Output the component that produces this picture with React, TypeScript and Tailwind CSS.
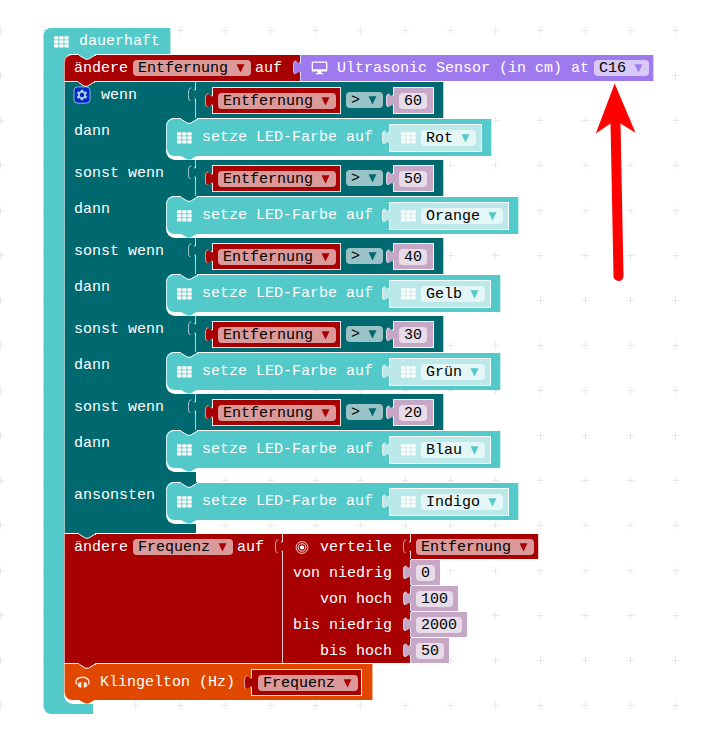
import React from "react";

const CYAN = "#54c9c9";
const PALE = "#bbe9e9";
const TEAL = "#006970";
const RED = "#a80000";
const MAUVE = "#c6a8c6";
const PURPLE = "#9f79ee";
const ORANGE = "#e04800";

/** Downward bump of the previous statement, lined with the block highlight. */
function Notch({ fill }: { fill: string }) {
  return (
    <svg className="absolute -top-px left-[14px]" width="17" height="7" viewBox="0 0 17 7">
      <path d="M0 0H16V1L15.5 1.5L9.5 5H6.5L.5 1.5L0 1Z" fill={fill} />
      <path d="M0 1.5H.5L6.5 5.200H9.5L15.5 1.5H17" fill="none" stroke="#fff" strokeWidth="1" />
    </svg>
  );
}

/** Bump under the last block of a stack. */
function BottomNotch({ fill }: { fill: string }) {
  return (
    <svg className="absolute -bottom-[4px] left-[14px]" width="16" height="5" viewBox="0 0 16 5">
      <path d="M0 0V1L6.5 4.500H9.5L15.5 1V0Z" fill={fill} />
    </svg>
  );
}

/** Puzzle tab on the left side of a value block. */
function Tab({ fill }: { fill: string }) {
  return (
    <svg className="absolute -left-[8px] top-[5px] overflow-visible" width="9" height="15" viewBox="0 0 9 15">
      <path d="M9.5 1.5H8c0 7-8-8.500-8 6s8-1 8 6H9.500Z" fill={fill} />
      <path d="M3.400 1C.6.600.5 4 .5 7.500S.6 14 2.400 13.600" fill="none" stroke="#fff" strokeOpacity=".65" />
      <path d="M7.500 0V1.500Q7.500 3 6 3M7.500 15V13.500Q7.500 12.500 6.500 12" fill="none" stroke="#fff" strokeOpacity=".75" />
    </svg>
  );
}

function GridIcon() {
  return (
    <svg className="shrink-0" width="15" height="12" viewBox="0 0 15 12">
      {[0, 1, 2].map((r) =>
        [0, 1, 2].map((c) => (
          <rect key={`${r}${c}`} x={c * 5.15 + 0.1} y={r * 4 + 0.2} width="4.300" height="3.200" rx=".3" fill="#fff" />
        )),
      )}
    </svg>
  );
}

function Dropdown({ text, arrow }: { text: string; arrow: string }) {
  return (
    <span className="flex h-[16px] shrink-0 items-center rounded-[4px] bg-white/60 pl-[5px] pr-[6px] leading-[16px] text-black">
      <span className="pt-px">{text}</span>
      <svg className="ml-[8px] mt-px" width="8.500" height="9" viewBox="0 0 8.5 9">
        <path d="M.5 .3H8.500L4.500 8.500Z" fill={arrow} />
      </svg>
    </span>
  );
}

function NumberField({ value }: { value: string }) {
  return <span className="flex h-[16px] items-center rounded-[4px] bg-white/60 px-[5px] pt-px leading-[16px] text-black">{value}</span>;
}

function Compare({ value }: { value: string }) {
  return (
    <div className="relative flex h-[36px] w-[249px] shrink-0 items-start border-x border-white/70 bg-[#006970] pl-[16px] pt-[5px]">
      <Tab fill={TEAL} />
      <div className="relative flex h-[27px] w-[129px] shrink-0 items-center border border-white/90 bg-[#a80000] pl-[5px] pt-px">
        <Tab fill={RED} />
        <Dropdown text="Entfernung" arrow={RED} />
      </div>
      <div className="ml-[5px] mt-[5px] flex w-[36px]">
        <Dropdown text=">" arrow={TEAL} />
      </div>
      <div className="relative ml-[11px] flex h-[27px] w-[41px] shrink-0 items-center border border-white/90 bg-[#c6a8c6] pl-[5px] pt-px">
        <Tab fill={MAUVE} />
        <NumberField value={value} />
      </div>
    </div>
  );
}

function SetLed({ color }: { color: string }) {
  return (
    <div className="relative flex h-[38px] w-max items-start rounded-l-[8px] border-x border-t border-x-white/70 border-t-white bg-[#54c9c9] pr-[9px]">
      <Notch fill={TEAL} />
      <BottomNotch fill={CYAN} />
      <div className="flex h-[37px] items-center pl-[10px]">
        <GridIcon />
        <span className="ml-[10px] pt-[2px]">setze LED-Farbe auf</span>
      </div>
      <div className="relative ml-[16px] mt-[5px] flex h-[28px] items-center border border-white/90 bg-[#bbe9e9] pl-[11px] pr-[5px]">
        <Tab fill={PALE} />
        <GridIcon />
        <span className="ml-[5px] flex">
          <Dropdown text={color} arrow={CYAN} />
        </span>
      </div>
    </div>
  );
}

function StatementRow({ label, color }: { label: string; color: string }) {
  return (
    <div className="flex h-[42px] w-[132px] bg-[#006970]">
      <div className="w-[102px] shrink-0 border-l border-white/60 pl-[9px] leading-[28px]">{label}</div>
      <div className="w-[30px] shrink-0 rounded-l-[9px] bg-white">
        <SetLed color={color} />
      </div>
    </div>
  );
}

function GearBadge() {
  return (
    <svg className="-ml-px mt-[4px]" width="18" height="18" viewBox="0 0 18 18">
      <rect x="1" y=".9" width="16" height="16.200" rx="3.500" fill="#0028c8" stroke="#8fb4d8" />
      <g transform="translate(9 9)">
        {[0, 60, 120, 180, 240, 300].map((a) => (
          <rect key={a} x="-1.300" y="-5.300" width="2.600" height="2.500" rx=".4" fill="#a8cfe0" transform={`rotate(${a})`} />
        ))}
        <circle r="3.100" fill="none" stroke="#a8cfe0" strokeWidth="1.700" />
      </g>
    </svg>
  );
}

const branches = [
  { value: "60", color: "Rot" },
  { value: "50", color: "Orange" },
  { value: "40", color: "Gelb" },
  { value: "30", color: "Grün" },
  { value: "20", color: "Blau" },
];

function IfBlock() {
  return (
    <div className="relative border-t border-white">
      <Notch fill={RED} />
      {branches.map((b, i) => (
        <React.Fragment key={b.value}>
          <div className="flex h-[36px]">
            <div className="flex w-[131px] shrink-0 items-start border-l border-white/60 bg-[#006970] pl-[9px] leading-[28px]">
              {i === 0 ? (
                <>
                  <GearBadge />
                  <span className="ml-[10px]">wenn</span>
                </>
              ) : (
                "sonst wenn"
              )}
            </div>
            <Compare value={b.value} />
          </div>
          <StatementRow label="dann" color={b.color} />
        </React.Fragment>
      ))}
      <div className="h-[10px] w-[132px] border-l border-white/60 bg-[#006970]" />
      <StatementRow label="ansonsten" color="Indigo" />
      <div className="h-[9px] w-[132px] border-l border-white/60 bg-[#006970]" />
    </div>
  );
}

const mapRows = [
  { label: "von niedrig", value: "0" },
  { label: "von hoch", value: "100" },
  { label: "bis niedrig", value: "2000" },
  { label: "bis hoch", value: "50" },
];

function MapBlock() {
  return (
    <div className="relative flex h-[129px] w-[129px] flex-col border-l border-white/80 bg-[#a80000]">
      <Tab fill={RED} />
      <div className="flex h-[26px]">
        <div className="flex w-[109px] shrink-0 items-center pl-[12px]">
          <svg width="14" height="14" viewBox="0 0 14 14" fill="none" stroke="#fff">
            <circle cx="7" cy="7.500" r="5.900" strokeWidth="1" strokeOpacity=".8" />
            <circle cx="7" cy="7.500" r="3.800" strokeWidth="1.100" strokeOpacity=".8" />
            <circle cx="7" cy="7.500" r="2.100" fill="#fff" stroke="none" />
          </svg>
          <span className="ml-auto pt-[2px] leading-[26px]">verteile</span>
        </div>
        <div className="relative ml-[18px] flex h-[25px] items-center border-x border-white/80 bg-[#a80000] pl-[5px] pr-[4px] pt-px">
          <Tab fill={RED} />
          <Dropdown text="Entfernung" arrow={RED} />
        </div>
      </div>
      {mapRows.map((row) => (
        <div key={row.label} className="flex h-[26px] shrink-0">
          <div className="w-[109px] shrink-0 text-right leading-[28px]">{row.label}</div>
          <div className="relative ml-[18px] flex h-[25px] items-center border-l border-white/50 bg-[#c6a8c6] px-[5px] pt-px">
            <Tab fill={MAUVE} />
            <NumberField value={row.value} />
          </div>
        </div>
      ))}
    </div>
  );
}

function WorkspaceGrid() {
  return (
    <svg className="absolute inset-0" width="701" height="746">
      <defs>
        <pattern id="dots" x="-22" y="8" width="45" height="45" patternUnits="userSpaceOnUse">
          <path d="M19 22.500H26M22.500 19V26" stroke="#e8e8e8" strokeWidth="1" />
        </pattern>
      </defs>
      <rect y="20" width="701" height="726" fill="url(#dots)" />
    </svg>
  );
}

export default function App() {
  return (
    <div className="relative h-[746px] w-[701px] overflow-hidden whitespace-pre bg-white font-['Liberation_Mono',monospace] text-[15px] text-white">
      <WorkspaceGrid />
      <div className="relative pl-[43px] pt-[28px]">
        <div className="w-[50px] rounded-l-[8px] border-l border-white/50 bg-[#54c9c9]">
          <div className="flex h-[26px] w-[127px] items-center rounded-tl-[8px] border-r border-white/60 bg-[#54c9c9] pl-[10px] pt-px">
            <GridIcon />
            <span className="ml-[10px] pt-px">dauerhaft</span>
          </div>
          <div className="ml-[20px] h-[650px] rounded-l-[9px] bg-white">
            <div className="w-max">
              <div className="relative flex h-[27px] rounded-tl-[8px] border-l border-t border-l-white/60 border-t-white bg-[#a80000] pl-[9px]">
                <Notch fill={CYAN} />
                <div className="flex h-[26px] w-[226px] items-center">
                  <span className="pt-[2px]">ändere</span>
                  <span className="ml-[5px] flex">
                    <Dropdown text="Entfernung" arrow={RED} />
                  </span>
                  <span className="ml-[4.500px] pt-[2px]">auf</span>
                </div>
                <div className="relative flex h-[26px] items-center border-x border-white/60 bg-[#9f79ee] pl-[10px] pr-[4px]">
                  <Tab fill={PURPLE} />
                  <svg width="17" height="14" viewBox="0 0 17 14">
                    <path fillRule="evenodd" d="M2 .5H15Q16.300.5 16.300 1.800V9.300Q16.300 10.600 15 10.600H10.300V12H12V13.200H5V12H6.700V10.600H2Q.7 10.600.7 9.300V1.800Q.7.500 2 .5ZM2 1.800V8.300H15V1.800Z" fill="#fff" />
                  </svg>
                  <span className="ml-[9px] pt-[2px]">Ultrasonic Sensor (in cm) at</span>
                  <span className="ml-[5px] flex">
                    <Dropdown text="C16" arrow={PURPLE} />
                  </span>
                </div>
              </div>
            </div>

            <div className="w-max">
              <IfBlock />
            </div>

            <div className="relative flex h-[130px] w-[219px] border-l border-t border-l-white/60 border-t-white bg-[#a80000]">
              <Notch fill={TEAL} />
              <div className="flex h-[26px] w-[217px] shrink-0 items-center pl-[9px]">
                <span className="pt-[2px]">ändere</span>
                <span className="ml-[5px] flex">
                  <Dropdown text="Frequenz" arrow={RED} />
                </span>
                <span className="ml-[4.500px] pt-[2px]">auf</span>
              </div>
              <div className="h-[129px]">
                <MapBlock />
              </div>
            </div>

            <div className="relative flex h-[37px] w-[309px] items-center rounded-bl-[8px] border-x border-t border-x-white/60 border-t-white bg-[#e04800] pl-[10px]">
              <Notch fill={RED} />
              <BottomNotch fill={ORANGE} />
              <svg width="15" height="14" viewBox="0 0 15 14">
                <path d="M1.500 9.500C.2 6.500 1.400 2.200 7.500 2.200S14.800 6.500 13.500 9.500" fill="none" stroke="#fff" strokeWidth="1.400" strokeOpacity=".85" />
                <path d="M6.300 7V12.700C4 12.700 2.600 11.500 2.600 9.800S4 7 6.300 7ZM8.700 7V12.700C11 12.700 12.400 11.500 12.400 9.800S11 7 8.700 7Z" fill="#fff" fillOpacity=".85" />
              </svg>
              <span className="ml-[10px] pt-[2px]">Klingelton (Hz)</span>
              <div className="relative ml-[16px] flex h-[27px] w-[111px] shrink-0 items-center border border-white/90 bg-[#a80000] pl-[6px] pt-[2px]">
                <Tab fill={RED} />
                <Dropdown text="Frequenz" arrow={RED} />
              </div>
            </div>
          </div>
          <div className="h-[10px]" />
        </div>
      </div>
      <svg className="absolute left-[590px] top-[80px]" width="52" height="206" viewBox="590 80 52 206">
        <path d="M615.500 122L618.500 276" stroke="#f00" strokeWidth="10" strokeLinecap="round" />
        <path d="M614.700 83.500L635.500 132.700L620.500 123.500H610.500L595.800 133.500Z" fill="#f00" />
      </svg>
    </div>
  );
}
